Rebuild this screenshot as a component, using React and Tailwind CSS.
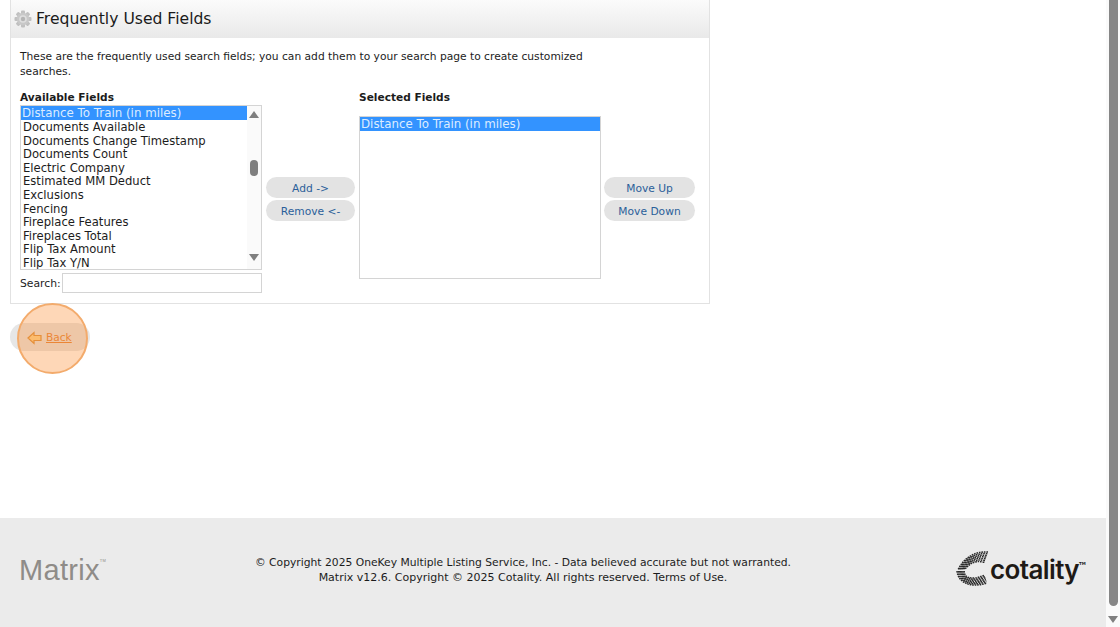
import React from "react";

const FIELDS = [
  "Documents Available",
  "Documents Change Timestamp",
  "Documents Count",
  "Electric Company",
  "Estimated MM Deduct",
  "Exclusions",
  "Fencing",
  "Fireplace Features",
  "Fireplaces Total",
  "Flip Tax Amount",
  "Flip Tax Y/N",
];

function Gear() {
  const teeth = [0, 45, 90, 135, 180, 225, 270, 315];
  return (
    <svg width="18" height="18" viewBox="0 0 18 18" className="shrink-0 -mt-[2px]">
      {teeth.map((a) => (
        <rect key={a} x="7" y="0.5" width="4" height="4" rx="1" fill="#c0c0c0" transform={`rotate(${a} 9 9)`} />
      ))}
      <circle cx="9" cy="9" r="6.2" fill="#c8c8c8" />
      <circle cx="9" cy="9" r="3.8" fill="#dedede" />
      <circle cx="9" cy="9" r="2.2" fill="#b4b4b4" />
    </svg>
  );
}

function PillButton({ children }) {
  return (
    <div className="h-[21px] w-full pt-[4px] rounded-[11px] bg-[#e3e3e3] flex items-center justify-center text-[10.7px] text-[#2b5f9a]">
      {children}
    </div>
  );
}

function SelectedOption({ label }) {
  return (
    <div className="h-[14px] bg-[#3393ff] text-[#dcecff] pl-[1px] text-[11.85px] leading-[15px] overflow-hidden whitespace-nowrap">
      {label}
    </div>
  );
}

function Option({ label }) {
  return <div className="h-[13.6px] pl-[2px] text-[11.6px] leading-[15px] text-[#1c1c1c] whitespace-nowrap">{label}</div>;
}

function CotalityMark() {
  const rows = [0, 1, 2, 3, 4, 5, 6];
  return (
    <svg width="34" height="40" viewBox="0 0 34 40">
      <g fill="none" stroke="#2a2a2a" strokeWidth="1.5" strokeDasharray="1.6 0.9">
        {rows.map((i) => (
          <path key={i} d={`M${32 - i * 0.6} ${2 + i * 1.7} C${20 - i * 0.5} ${1 + i * 1.5} ${8 + i} ${7 + i * 1.2} ${2 + i * 1.2} ${20 - i * 0.2}`} />
        ))}
        {rows.map((i) => (
          <path key={i} d={`M${1 + i * 1.2} ${21} C${2 + i} ${31 - i * 0.7} ${12 + i * 0.3} ${39 - i * 1.3} ${31 - i * 0.4} ${33 - i * 1.3}`} />
        ))}
      </g>
    </svg>
  );
}

export default function App() {
  return (
    <div className="relative h-[627px] w-[1120px] overflow-hidden flex bg-white font-['DejaVu_Sans',Verdana,sans-serif] text-[#1c1c1c]">
      <div className="w-[1106px] flex flex-col">
        <div className="flex-1 pl-[10px]">
          <div className="w-[700px] h-[304px] border-x border-b border-[#e2e2e2] flex flex-col">
            <div className="h-[38px] shrink-0 pt-[1px] bg-gradient-to-b from-[#fbfbfb] to-[#e9e9e9] flex items-center gap-[4px] pl-[3px]">
              <Gear />
              <h1 className="text-[15.6px] text-[#1a1a1a]">Frequently Used Fields</h1>
            </div>
            <div className="pl-[9px] pt-[12px]">
              <p className="w-[570px] text-[10.7px] leading-[14.5px]">
                These are the frequently used search fields; you can add them to your search page to create customized searches.
              </p>
              <div className="flex mt-[12px]">
                <div className="w-[242px]">
                  <div className="text-[10.6px] font-bold leading-[13px] h-[14px]">Available Fields</div>
                  <div className="h-[165px] border border-[#d4d4d4] flex bg-white overflow-hidden">
                    <div className="flex-1">
                      <SelectedOption label="Distance To Train (in miles)" />
                      {FIELDS.map((f) => (
                        <Option key={f} label={f} />
                      ))}
                    </div>
                    <div className="w-[14px] bg-[#fafafa] flex flex-col items-center pt-[5px]">
                      <div className="w-0 h-0 border-x-[5px] border-x-transparent border-b-[7px] border-b-[#7f7f7f]" />
                      <div className="w-[8px] h-[16px] mt-[42px] rounded-[4px] bg-[#7f7f7f]" />
                      <div className="w-0 h-0 mt-[78px] border-x-[5px] border-x-transparent border-t-[7px] border-t-[#7f7f7f]" />
                    </div>
                  </div>
                  <div className="flex items-center mt-[3px] text-[10.8px]">
                    <span className="w-[42px] pt-[2px]">Search:</span>
                    <div className="w-[200px] h-[20px] border border-[#d4d4d4]" />
                  </div>
                </div>
                <div className="w-[89px] ml-[4px] mt-[72px] flex flex-col gap-[2px] pt-[14px]">
                  <PillButton>{"Add ->"}</PillButton>
                  <PillButton>{"Remove <-"}</PillButton>
                </div>
                <div className="w-[242px] ml-[4px]">
                  <div className="text-[10.6px] font-bold leading-[13px] h-[14px]">Selected Fields</div>
                  <div className="mt-[11px] h-[163px] border border-[#d4d4d4]">
                    <SelectedOption label="Distance To Train (in miles)" />
                  </div>
                </div>
                <div className="w-[91px] ml-[3px] mt-[72px] flex flex-col gap-[2px] pt-[14px]">
                  <PillButton>Move Up</PillButton>
                  <PillButton>Move Down</PillButton>
                </div>
              </div>
            </div>
          </div>
          <div className="mt-[19px] w-[80px] h-[28px] pt-[1px] rounded-[14px] bg-[#e6e6e6] flex items-center pl-[17px] gap-[4px] text-[10.6px] text-[#e2833a]">
            <svg width="15" height="14" viewBox="0 0 15 14">
              <path d="M1 7 L7 1.5 V4.5 H14 V9.5 H7 V12.5 Z" fill="#fcd690" stroke="#d9913f" strokeWidth="1.2" />
            </svg>
            <span className="underline">Back</span>
          </div>
        </div>
        <footer className="h-[109px] shrink-0 bg-[#ebebeb] flex items-center pl-[19px] pr-[19px]">
          <div className="w-[130px] flex items-start text-[#8f8c88] font-['Liberation_Sans',sans-serif] text-[29px] leading-none tracking-[0.3px] mb-[4px]">
            Matrix<span className="text-[4px] leading-[10px]">TM</span>
          </div>
          <div className="flex-1 text-center leading-[14.5px] mb-[4px] pr-[59px]">
            <div className="text-[10.74px]">© Copyright 2025 OneKey Multiple Listing Service, Inc. - Data believed accurate but not warranted.</div>
            <div className="text-[11px]">Matrix v12.6. Copyright © 2025 Cotality. All rights reserved. Terms of Use.</div>
          </div>
          <div className="w-[131px] flex items-center mb-[5px]">
            <CotalityMark />
            <span className="font-['Inter',sans-serif] font-semibold text-[26px] tracking-[-0.6px] leading-none text-[#1e1a16]">cotality</span>
            <span className="text-[4px] self-start mt-[11px] font-bold">TM</span>
          </div>
        </footer>
      </div>
      <div className="w-[14px] bg-[#fafafa] flex flex-col items-center justify-between">
        <div className="w-[9px] h-[606px] rounded-b-[5px] bg-[#868686]" />
        <div className="w-0 h-0 mb-[4px] border-x-[5.5px] border-x-transparent border-t-[7px] border-t-[#7f7f7f]" />
      </div>
      <div className="absolute left-[17px] top-[303px] w-[71px] h-[71px] rounded-full bg-[#fb8c32]/35 border-[2.5px] border-[#f3ab6c]" />
    </div>
  );
}
